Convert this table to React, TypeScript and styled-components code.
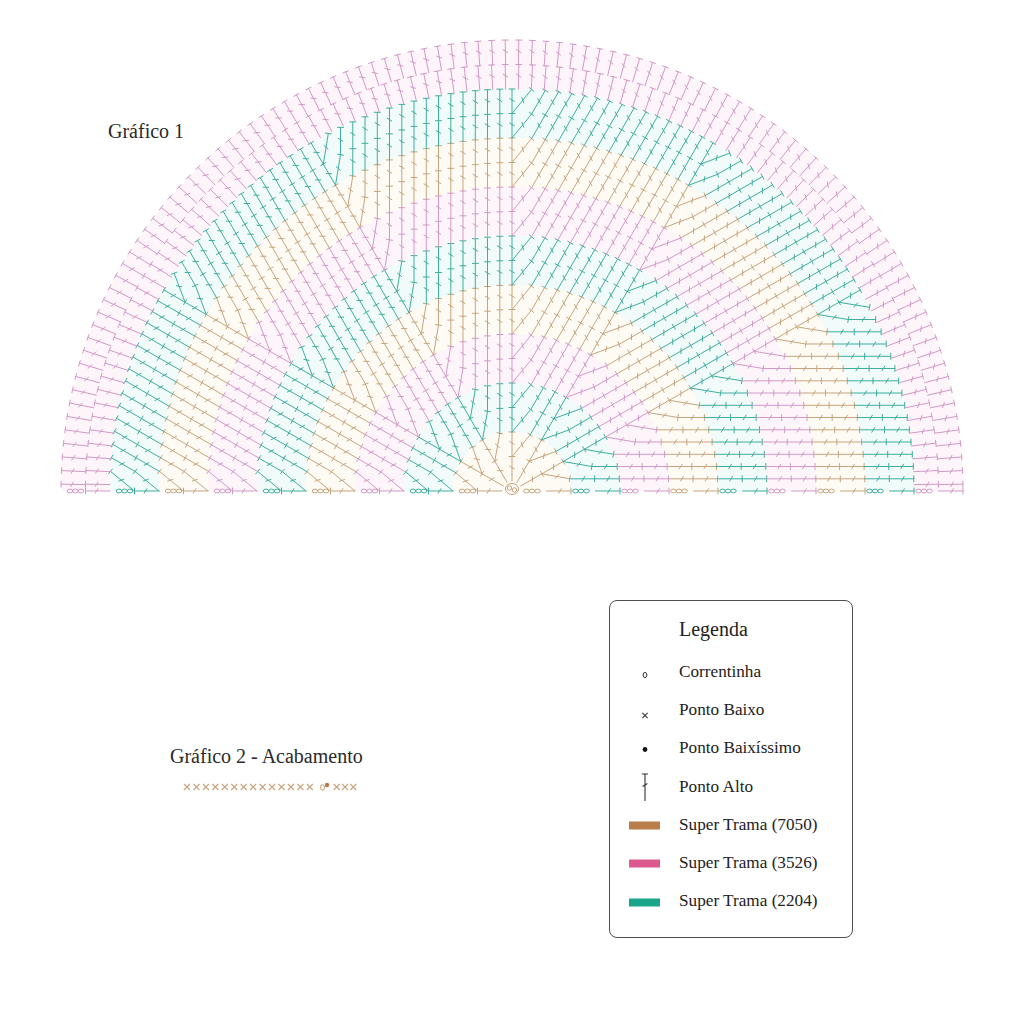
import React from 'react';
import styled, { createGlobalStyle } from 'styled-components';

const GlobalStyle = createGlobalStyle`
  html, body { margin: 0; padding: 0; background: #ffffff; }
  body { font-family: "Liberation Serif", "Times New Roman", serif; color: #222; }
`;

/* ---------- chart geometry ---------- */
const CX = 512;
const CY = 491;
const ROW = 24.5;
const R0 = 10;
const COL = 12.25;
const rho = (n: number) => R0 + ROW * n;
const STROKES = ['#c6a57e', '#41ad9f', '#d299c7'];
const FILLS = ['#fefaf4', '#f1fbf9', '#fdf5fa'];
const rowColor = (n: number) => Math.floor(n / 2) % 3;
const DEG = Math.PI / 180;

const P = (x: number, y: number) => `${(CX + x).toFixed(1)} ${(CY - y).toFixed(1)}`;

function treble(ax: number, ay: number, bx: number, by: number): string {
  const dx = bx - ax;
  const dy = by - ay;
  const L = Math.hypot(dx, dy);
  const ux = dx / L;
  const uy = dy / L;
  const px = -uy;
  const py = ux;
  const mx = ax + dx * 0.55;
  const my = ay + dy * 0.55;
  return (
    `M${P(ax, ay)}L${P(bx, by)}` +
    `M${P(bx + px * 3, by + py * 3)}L${P(bx - px * 3, by - py * 3)}` +
    `M${P(mx - px * 2.3 - ux * 1.4, my - py * 2.3 - uy * 1.4)}L${P(mx + px * 2.3 + ux * 1.4, my + py * 2.3 + uy * 1.4)}`
  );
}

type Chain = { x: number; color: number };

function buildChart() {
  const paths = ['', '', ''];
  const chains: Chain[] = [];

  // wedges of parallel stitch columns
  for (let k = 0; k < 6; k++) {
    const phi = k * 30 * DEG;
    const ex = Math.cos(phi);
    const ey = Math.sin(phi);
    const nx = -Math.sin(phi);
    const ny = Math.cos(phi);
    const nextA = phi + 30 * DEG;
    for (let j = k === 0 ? 1 : 0; j <= 15; j++) {
      const v = j * COL;
      for (let n = j; n <= 15; n++) {
        const ub = Math.sqrt(rho(n + 1) ** 2 - v * v);
        const bx = ex * ub + nx * v;
        const by = ey * ub + ny * v;
        let ax: number;
        let ay: number;
        if (n === j && j > 0) {
          ax = Math.cos(nextA) * rho(n);
          ay = Math.sin(nextA) * rho(n);
        } else {
          const ua = Math.sqrt(Math.max(rho(n) ** 2 - v * v, 0));
          ax = ex * ua + nx * v;
          ay = ey * ua + ny * v;
        }
        paths[rowColor(n)] += treble(ax, ay, bx, by);
      }
    }
  }

  // outer rim rows: radial stitches
  const rim: [number, number][] = [
    [16, 98],
    [17, 104],
  ];
  rim.forEach(([n, N]) => {
    for (let i = 0; i < N; i++) {
      const t = ((i + 0.5) * Math.PI) / N;
      const c = Math.cos(t);
      const s = Math.sin(t);
      paths[rowColor(n)] += treble(c * rho(n), s * rho(n), c * rho(n + 1), s * rho(n + 1));
    }
  });

  // baseline: turning chains and end stitches
  for (let n = 0; n < 18; n++) {
    const col = rowColor(n);
    if (n % 2 === 0) {
      [4.5, 10, 15.5].forEach((o) => chains.push({ x: CX + rho(n) + o, color: col }));
      paths[col] += treble(-rho(n), 0, -rho(n + 1), 0);
    } else {
      [4.5, 10, 15.5].forEach((o) => chains.push({ x: CX - rho(n) - o, color: col }));
      paths[col] += treble(rho(n), 0, rho(n + 1), 0);
    }
  }

  // band tints
  const bands: { d: string; color: number }[] = [];
  for (let b = 0; b < 9; b++) {
    const ri = b === 0 ? 0 : rho(2 * b);
    const ro = rho(2 * b + 2);
    let d = `M${CX + ro} ${CY} A${ro} ${ro} 0 0 0 ${CX - ro} ${CY}`;
    if (ri > 0) {
      d += ` L${CX - ri} ${CY} A${ri} ${ri} 0 0 1 ${CX + ri} ${CY} Z`;
    } else {
      d += ' Z';
    }
    bands.push({ d, color: b % 3 });
  }
  return { paths, chains, bands };
}

const CHART = buildChart();

/* ---------- styled parts ---------- */
const Page = styled.main`
  width: 1024px;
  min-height: 1015px;
  background: #ffffff;
`;

const ChartArea = styled.section`
  display: grid;
  width: 1024px;
  height: 520px;
  & > * {
    grid-area: 1 / 1;
  }
`;

const ChartTitle = styled.h2`
  margin: 121px 0 0 108px;
  align-self: start;
  justify-self: start;
  z-index: 1;
  font-size: 20px;
  font-weight: 400;
  line-height: 1;
  color: #2a2a2a;
`;

const ChartCanvas = styled.svg`
  display: block;
  width: 1024px;
  height: 520px;
`;

const Lower = styled.section`
  display: flex;
  align-items: flex-start;
`;

const FinishBlock = styled.div`
  width: 439px;
  margin: 226.25px 0 0 170px;
`;

const FinishTitle = styled.h3`
  margin: 0;
  font-size: 20px;
  font-weight: 400;
  line-height: 1;
  color: #2a2a2a;
`;

const FinishRow = styled.svg`
  display: block;
  margin: 13.45px 0 0 10px;
  width: 180px;
  height: 14px;
`;

const Legend = styled.aside`
  box-sizing: border-box;
  width: 244px;
  height: 338.3px;
  margin-top: 80px;
  padding-top: 5px;
  border: 1px solid #4d4d4d;
  border-radius: 8px;
`;

const LegendTitle = styled.div`
  padding-left: 69px;
  font-size: 20px;
  line-height: 46.7px;
  color: #222;
`;

const LegendList = styled.ul`
  list-style: none;
  margin: 0;
  padding: 0;
`;

const LegendItem = styled.li`
  display: grid;
  grid-template-columns: 69px auto;
  align-items: center;
  height: 38.3px;
  font-size: 17.2px;
  line-height: 38.3px;
  color: #222;
`;

const IconCell = styled.span<{ $dy: number }>`
  display: flex;
  justify-content: center;
  align-items: center;
  transform: translateY(${(p) => p.$dy}px);
`;

const Swatch = styled.span<{ $color: string }>`
  display: block;
  width: 31px;
  height: 8px;
  background: ${(p) => p.$color};
`;

/* ---------- icons ---------- */
const ChainIcon = () => (
  <svg width="10" height="10" viewBox="0 0 10 10">
    <ellipse cx="5" cy="5" rx="1.9" ry="2.6" fill="none" stroke="#333" strokeWidth="1" />
  </svg>
);

const CrossIcon = () => (
  <svg width="10" height="10" viewBox="0 0 10 10">
    <path d="M2.4 2.4L7.6 7.6M7.6 2.4L2.4 7.6" stroke="#333" strokeWidth="1.1" />
  </svg>
);

const DotIcon = () => (
  <svg width="10" height="10" viewBox="0 0 10 10">
    <circle cx="5" cy="5" r="2.4" fill="#151515" />
  </svg>
);

const TrebleIcon = () => (
  <svg width="12" height="30" viewBox="0 0 12 30">
    <path d="M3 2H9M6 2V29M3.6 14.5L8.4 11.5" stroke="#333" strokeWidth="1.1" fill="none" />
  </svg>
);

const FinishSymbols = () => {
  const xs: number[] = [];
  for (let i = 0; i < 14; i++) xs.push(7 + i * 9.45);
  [156.7, 165, 173.3].forEach((x) => xs.push(x));
  return (
    <FinishRow viewBox="0 0 180 14">
      {xs.map((x, i) => (
        <path
          key={i}
          d={`M${x - 3} ${4}L${x + 3} ${10}M${x + 3} ${4}L${x - 3} ${10}`}
          stroke="#c9a47c"
          strokeWidth="1.1"
        />
      ))}
      <ellipse cx="142.5" cy="7.5" rx="2" ry="2.8" fill="none" stroke="#c49a70" strokeWidth="1" />
      <circle cx="147" cy="5" r="2.2" fill="#b8774c" />
    </FinishRow>
  );
};

const legendItems: { label: string; icon: React.ReactNode; dy: number }[] = [
  { label: 'Correntinha', icon: <ChainIcon />, dy: 3 },
  { label: 'Ponto Baixo', icon: <CrossIcon />, dy: 5.5 },
  { label: 'Ponto Baixíssimo', icon: <DotIcon />, dy: 1.5 },
  { label: 'Ponto Alto', icon: <TrebleIcon />, dy: 0 },
  { label: 'Super Trama (7050)', icon: <Swatch $color="#b97d49" />, dy: 0.5 },
  { label: 'Super Trama (3526)', icon: <Swatch $color="#dc5a8e" />, dy: 0.5 },
  { label: 'Super Trama (2204)', icon: <Swatch $color="#1aa58b" />, dy: 0.5 },
];

export default function App() {
  return (
    <Page>
      <GlobalStyle />
      <ChartArea>
        <ChartTitle>Gráfico 1</ChartTitle>
        <ChartCanvas viewBox="0 0 1024 520">
          {CHART.bands.map((b, i) => (
            <path key={`b${i}`} d={b.d} fill={FILLS[b.color]} />
          ))}
          {CHART.paths.map((d, i) => (
            <path key={`p${i}`} d={d} stroke={STROKES[i]} strokeWidth="1" fill="none" strokeLinecap="round" />
          ))}
          {CHART.chains.map((c, i) => (
            <ellipse
              key={`c${i}`}
              cx={c.x}
              cy={CY}
              rx="2.8"
              ry="1.9"
              fill="none"
              stroke={STROKES[c.color]}
              strokeWidth="1"
            />
          ))}
          <g fill="none" stroke={STROKES[0]} strokeWidth="1">
            <ellipse cx={CX} cy={CY - 2} rx="6.5" ry="5.5" />
            <circle cx={CX - 2.5} cy={CY - 3} r="2.2" />
            <circle cx={CX + 2.5} cy={CY - 1} r="2.2" />
          </g>
        </ChartCanvas>
      </ChartArea>
      <Lower>
        <FinishBlock>
          <FinishTitle>Gráfico 2 - Acabamento</FinishTitle>
          <FinishSymbols />
        </FinishBlock>
        <Legend>
          <LegendTitle>Legenda</LegendTitle>
          <LegendList>
            {legendItems.map((it) => (
              <LegendItem key={it.label}>
                <IconCell $dy={it.dy}>{it.icon}</IconCell>
                <span>{it.label}</span>
              </LegendItem>
            ))}
          </LegendList>
        </Legend>
      </Lower>
    </Page>
  );
}
